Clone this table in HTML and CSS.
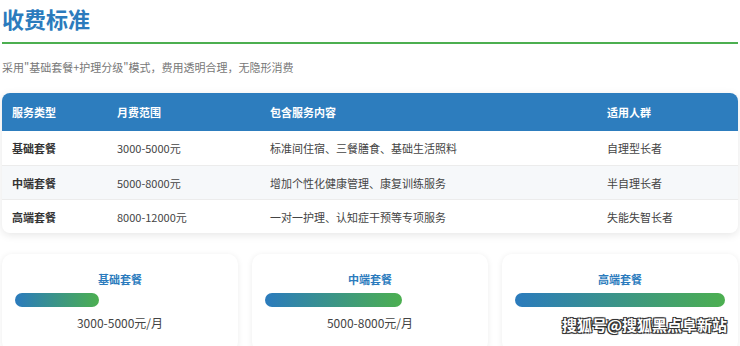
FILE: index.html
```html
<!DOCTYPE html>
<html lang="zh-CN">
<head>
  <meta charset="UTF-8" />
  <title>收费标准</title>
  <link rel="stylesheet" href="styles.css">
</head>
<body>
  <div class="page">
    <h1 class="title">收费标准</h1>
    <p class="intro">采用"基础套餐+护理分级"模式，费用透明合理，无隐形消费</p>

    <table class="fee-table">
      <thead>
        <tr>
          <th class="c1">服务类型</th>
          <th class="c2">月费范围</th>
          <th class="c3">包含服务内容</th>
          <th class="c4">适用人群</th>
        </tr>
      </thead>
      <tbody>
        <tr>
          <td class="type">基础套餐</td>
          <td>3000-5000元</td>
          <td>标准间住宿、三餐膳食、基础生活照料</td>
          <td>自理型长者</td>
        </tr>
        <tr>
          <td class="type">中端套餐</td>
          <td>5000-8000元</td>
          <td>增加个性化健康管理、康复训练服务</td>
          <td>半自理长者</td>
        </tr>
        <tr>
          <td class="type">高端套餐</td>
          <td>8000-12000元</td>
          <td>一对一护理、认知症干预等专项服务</td>
          <td>失能失智长者</td>
        </tr>
      </tbody>
    </table>

    <div class="cards">
      <div class="card">
        <div class="card-title">基础套餐</div>
        <div class="bar"><div class="fill" style="width: 40%"></div></div>
        <div class="price">3000-5000元/月</div>
      </div>
      <div class="card">
        <div class="card-title">中端套餐</div>
        <div class="bar"><div class="fill" style="width: 65%"></div></div>
        <div class="price">5000-8000元/月</div>
      </div>
      <div class="card">
        <div class="card-title">高端套餐</div>
        <div class="bar"><div class="fill" style="width: 100%"></div></div>
        <div class="price">8000-12000元/月</div>
      </div>
    </div>
  </div>

  <div class="watermark">搜狐号@搜狐黑点阜新站</div>
</body>
</html>
```

FILE: styles.css
```css
* { box-sizing: border-box; margin: 0; padding: 0; }
html, body { background: #ffffff; overflow: hidden; }
body { font-family: "Noto Sans CJK SC", "Noto Sans", sans-serif; color: #333; }

.page { padding: 0 2px; }

.title {
  font-size: 22px; line-height: 28px; font-weight: 700; color: #2b7bbd;
  padding: 4px 0 10px; border-bottom: 2px solid #4caf50;
}

.intro { font-size: 11px; line-height: 18px; color: #777; margin: 14px 0 17px; }

.fee-table {
  width: 736px; border-collapse: separate; border-spacing: 0;
  border-radius: 8px; overflow: hidden; table-layout: fixed;
  box-shadow: 0 2px 8px rgba(0, 0, 0, 0.1);
  font-size: 11px;
}
.fee-table th {
  background-color: #2d7dbe; color: #fff; font-weight: 700;
  height: 38px; text-align: left; padding: 0 10px;
}
.fee-table td { height: 34px; padding: 0 10px; color: #444; border-top: 1px solid #ececec; }
.fee-table tbody tr:first-child td { border-top: none; }
.fee-table tbody tr:nth-child(2) td { background-color: #f6f8fa; }
.fee-table td.type { font-weight: 700; color: #333; }
.c1 { width: 105px; }
.c2 { width: 153px; }
.c3 { width: 337px; }

.cards { display: grid; grid-template-columns: repeat(3, 1fr); gap: 14px; margin-top: 21px; }
.card {
  background: #fff; border-radius: 10px; padding: 16px 13px 20px;
  box-shadow: 0 1px 6px rgba(0, 0, 0, 0.08); text-align: center;
}
.card-title { font-size: 11px; line-height: 18px; font-weight: 700; color: #2b7bbd; }
.bar { margin-top: 5px; height: 14px; }
.fill { height: 100%; border-radius: 7px; background: linear-gradient(90deg, #2b7bbd, #4caf50); }
.price { margin-top: 7px; font-size: 12px; line-height: 18px; color: #444; }

.watermark {
  position: absolute; left: 562px; top: 313px; white-space: nowrap;
  font-size: 15px; line-height: 24px; font-weight: 700; color: #fff;
  text-shadow: -1px -1px 0 #333, 1px -1px 0 #333, -1px 1px 0 #333, 1px 1px 0 #333, 0 0 2px #000;
}
```
